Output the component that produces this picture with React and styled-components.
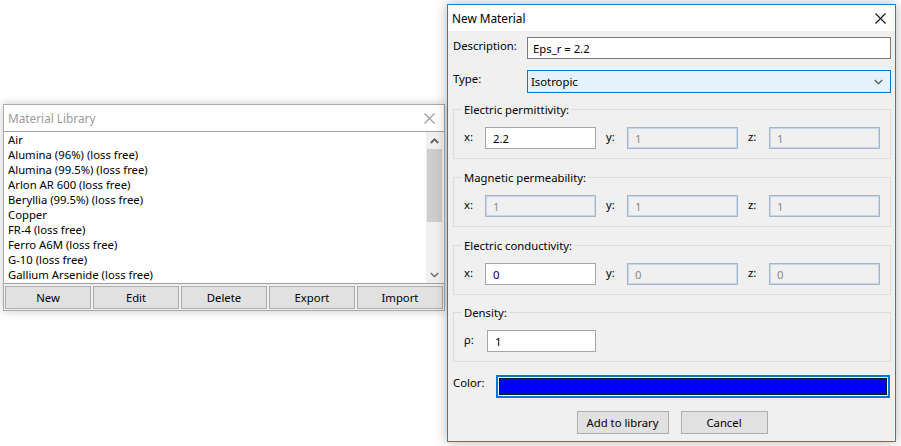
import React from "react";
import styled, { createGlobalStyle } from "styled-components";

const GlobalStyle = createGlobalStyle`
    html, body {
        margin: 0;
        padding: 0;
        background: #ffffff;
    }
    body {
        font-family: "Noto Sans", "Open Sans", Arial, sans-serif;
        font-size: 11.3px;
        color: #000;
    }
`

const materials = [
    'Air',
    'Alumina (96%) (loss free)',
    'Alumina (99.5%) (loss free)',
    'Arlon AR 600 (loss free)',
    'Beryllia (99.5%) (loss free)',
    'Copper',
    'FR-4 (loss free)',
    'Ferro A6M (loss free)',
    'G-10 (loss free)',
    'Gallium Arsenide (loss free)',
]

// gap = space above each group box
const groups = [
    { title: 'Electric permittivity:', values: ['2.2', '1', '1'], enabled: [true, false, false], gap: 9 },
    { title: 'Magnetic permeability:', values: ['1', '1', '1'], enabled: [false, false, false], gap: 11 },
    { title: 'Electric conductivity:', values: ['0', '0', '0'], enabled: [true, false, false], gap: 11 },
]

function CloseIcon({ color }) {
    return (
        <svg width="11" height="11" viewBox="0 0 11 11">
            <path d="M0.5 0.5 L10.5 10.5 M10.5 0.5 L0.5 10.5" stroke={color} strokeWidth="1.1" fill="none" />
        </svg>
    )
}

function Chevron({ up, color = '#606060', w = 9 }) {
    return (
        <svg width={w} height="6" viewBox="0 0 9 6">
            <path d={up ? "M0.8 5 L4.5 1.3 L8.2 5" : "M0.8 1 L4.5 4.7 L8.2 1"} stroke={color} strokeWidth={up ? 1.8 : 1.3} fill="none" />
        </svg>
    )
}

function MaterialLibrary() {
    return (
        <LibraryWindow>
            <TitleBar>
                <Title $inactive>Material Library</Title>
                <CloseButton><CloseIcon color="#9a9a9a" /></CloseButton>
            </TitleBar>
            <ListBox>
                <Items>
                    {materials.map((m) => (
                        <Item key={m}>{m}</Item>
                    ))}
                </Items>
                <ScrollBar>
                    <Arrow><Chevron up /></Arrow>
                    <Track>
                        <Thumb />
                    </Track>
                    <Arrow><Chevron /></Arrow>
                </ScrollBar>
            </ListBox>
            <ButtonRow>
                <FlatButton>New</FlatButton>
                <FlatButton>Edit</FlatButton>
                <FlatButton>Delete</FlatButton>
                <FlatButton>Export</FlatButton>
                <FlatButton>Import</FlatButton>
            </ButtonRow>
        </LibraryWindow>
    )
}

function NewMaterial() {
    return (
        <DialogWindow>
            <TitleBar>
                <Title>New Material</Title>
                <CloseButton><CloseIcon color="#111" /></CloseButton>
            </TitleBar>
            <DialogBody>
                <FormRow>
                    <RowLabel>Description:</RowLabel>
                    <TextBox>Eps_r = 2.2</TextBox>
                </FormRow>
                <FormRow $top={11}>
                    <RowLabel>Type:</RowLabel>
                    <Select>
                        <span>Isotropic</span>
                        <Chevron color="#555" />
                    </Select>
                </FormRow>

                {groups.map((g) => (
                    <Group key={g.title} $gap={g.gap}>
                        <Legend>{g.title}</Legend>
                        <Triple>
                            {['x:', 'y:', 'z:'].map((axis, i) => (
                                <Axis key={axis}>
                                    <AxisLabel>{axis}</AxisLabel>
                                    <ValueBox $disabled={!g.enabled[i]}>{g.values[i]}</ValueBox>
                                </Axis>
                            ))}
                        </Triple>
                    </Group>
                ))}

                <Group $gap={10}>
                    <Legend>Density:</Legend>
                    <Triple>
                        <Axis>
                            <AxisLabel $wide>ρ:</AxisLabel>
                            <ValueBox>1</ValueBox>
                        </Axis>
                    </Triple>
                </Group>

                <ColorRow>
                    <ColorLabel>Color:</ColorLabel>
                    <ColorSwatch>
                        <ColorFill />
                    </ColorSwatch>
                </ColorRow>

                <DialogButtons>
                    <PushButton $w={92}>Add to library</PushButton>
                    <PushButton $w={87}>Cancel</PushButton>
                </DialogButtons>
            </DialogBody>
        </DialogWindow>
    )
}

export default function App() {
    return (
        <>
            <GlobalStyle />
            <Desktop>
                <MaterialLibrary />
                <NewMaterial />
            </Desktop>
        </>
    )
}

const Desktop = styled.div`
    position: relative;
    width: 901px;
    height: 446px;
    overflow: hidden;
    background: #fff;
`

const WindowBase = styled.div`
    position: absolute;
    box-sizing: border-box;
    display: flex;
    flex-direction: column;
    background: #f0f0f0;
`

const LibraryWindow = styled(WindowBase)`
    left: 3px;
    top: 104px;
    width: 442px;
    height: 207px;
    border: 1px solid #aaaaaa;
    box-shadow: 0 0 9px rgba(0, 0, 0, 0.22);
`

const DialogWindow = styled(WindowBase)`
    left: 447px;
    top: 4px;
    width: 449px;
    height: 438px;
    border: 1px solid #1883d7;
    box-shadow: 0 0 12px rgba(0, 0, 0, 0.3);
`

const TitleBar = styled.div`
    height: 26px;
    flex: none;
    background: #fff;
    display: flex;
    align-items: center;
    justify-content: space-between;
    padding: 0 9px 1px 4px;
    box-sizing: border-box;
`

const Title = styled.div`
    font-size: 11.8px;
    color: ${p => p.$inactive ? '#9a9a9a' : '#000'};
`

const CloseButton = styled.div`
    display: flex;
    align-items: center;
    padding-top: 1px;
`

const ListBox = styled.div`
    display: flex;
    height: 153px;
    flex: none;
    background: #fff;
    border-top: 1px solid #a0a0a0;
    border-bottom: 1px solid #a0a0a0;
    box-sizing: border-box;
`

const Items = styled.div`
    flex: 1;
    padding: 0 4px;
`

const Item = styled.div`
    height: 15px;
    line-height: 15px;
    white-space: nowrap;
`

const ScrollBar = styled.div`
    width: 17px;
    margin-right: 1px;
    display: flex;
    flex-direction: column;
    background: #f0f0f0;
`

const Arrow = styled.div`
    height: 17px;
    display: flex;
    align-items: center;
    justify-content: center;
`

const Track = styled.div`
    flex: 1;
`

const Thumb = styled.div`
    height: 73px;
    background: #cdcdcd;
    margin: 0 1px;
`

const ButtonRow = styled.div`
    flex: 1;
    display: grid;
    grid-template-columns: repeat(5, 1fr);
    gap: 2px;
    padding: 2px 1px 1px 1px;
`

const FlatButton = styled.div`
    background: #e1e1e1;
    border: 1px solid #adadad;
    display: flex;
    align-items: center;
    justify-content: center;
`

const DialogBody = styled.div`
    flex: 1;
    display: flex;
    flex-direction: column;
    padding: 6px 4px 0 5px;
`

const FormRow = styled.div`
    display: flex;
    align-items: flex-start;
    margin-top: ${p => p.$top || 0}px;
`

const RowLabel = styled.div`
    width: 74px;
    flex: none;
    padding-top: 1px;
`

const TextBox = styled.div`
    flex: 1;
    height: 22px;
    box-sizing: border-box;
    border: 1px solid #7a7a7a;
    background: #fff;
    display: flex;
    align-items: center;
    padding-left: 5px;
`

const Select = styled.div`
    flex: 1;
    height: 23px;
    box-sizing: border-box;
    border: 1px solid #0078d7;
    background: #e5f1fb;
    display: flex;
    align-items: center;
    justify-content: space-between;
    padding: 0 7px 0 3px;
`

const Group = styled.fieldset`
    margin: ${p => p.$gap}px 0 0 0;
    padding: 2px 10px 9px 10px;
    border: 1px solid #dcdcdc;
    min-width: 0;
`

const Legend = styled.legend`
    padding: 0 2px;
    margin-left: -2px;
    line-height: 15px;
`

const Triple = styled.div`
    display: grid;
    grid-template-columns: repeat(3, 1fr);
    column-gap: 10px;
    padding-top: 8px;
`

const Axis = styled.div`
    display: flex;
    align-items: center;
`

const AxisLabel = styled.div`
    width: ${p => p.$wide ? 23 : 21}px;
    flex: none;
    margin-top: -4px;
`

const ValueBox = styled.div`
    flex: 1;
    height: 22px;
    box-sizing: border-box;
    display: flex;
    align-items: center;
    padding-left: 7px;
    background: ${p => p.$disabled ? '#f0f0f0' : '#fff'};
    color: ${p => p.$disabled ? '#8a8a8a' : '#000'};
    border: 1px solid ${p => p.$disabled ? '#a9b6c6' : '#a6a6a6'};
    box-shadow: ${p => p.$disabled ? 'inset 0 0 0 1px #c4d6ec' : 'none'};
`

const ColorRow = styled.div`
    display: flex;
    align-items: flex-start;
    margin-top: 13px;
`

const ColorLabel = styled.div`
    width: 43px;
    flex: none;
`

const ColorSwatch = styled.div`
    flex: 1;
    margin-right: 1px;
    height: 23px;
    box-sizing: border-box;
    border: 2px solid #0078d7;
    background: #fff;
    padding: 1px;
`

const ColorFill = styled.div`
    height: 100%;
    box-sizing: border-box;
    background: #0000ff;
    outline: 1px dotted #000;
    outline-offset: -1px;
`

const DialogButtons = styled.div`
    display: flex;
    justify-content: center;
    gap: 12px;
    margin-top: 13px;
`

const PushButton = styled.div`
    width: ${p => p.$w}px;
    height: 23px;
    box-sizing: border-box;
    background: #e1e1e1;
    border: 1px solid #adadad;
    display: flex;
    align-items: center;
    justify-content: center;
`
